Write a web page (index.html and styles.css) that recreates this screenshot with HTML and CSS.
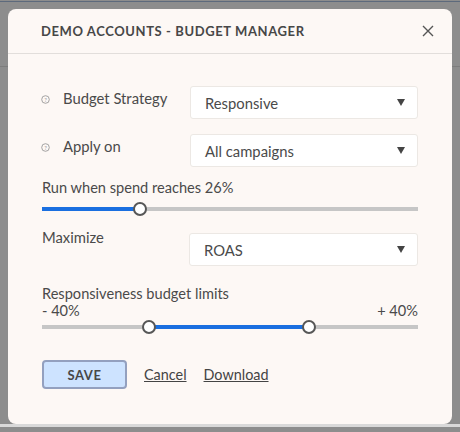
FILE: index.html
```html
<!doctype html>
<html>
<head>
<meta charset="utf-8">
<title>Budget Manager</title>
<link rel="stylesheet" href="styles.css">
</head>
<body>

<div class="modal">
    <div class="head">
        <h2 class="title">DEMO ACCOUNTS - BUDGET MANAGER</h2>
        <svg class="close" width="12" height="12" viewBox="0 0 12 12"><path d="M1 1L11 11M11 1L1 11" stroke="#555" stroke-width="1.4" fill="none"/></svg>
    </div>

    <div class="body">
        <div class="row first">
            <div class="label"><svg class="help" width="9" height="9" viewBox="0 0 9 9"><circle cx="4.5" cy="4.5" r="3.8" stroke="#9a9a9a" stroke-width="0.9" fill="none"/><text x="4.5" y="6.5" font-size="6" text-anchor="middle" fill="#9a9a9a" font-family="Lato, sans-serif">?</text></svg>Budget Strategy</div>
            <div class="select">Responsive<svg width="8" height="7" viewBox="0 0 8 7"><polygon points="0,0 8,0 4,7" fill="#444"/></svg></div>
        </div>
        <div class="row">
            <div class="label"><svg class="help" width="9" height="9" viewBox="0 0 9 9"><circle cx="4.5" cy="4.5" r="3.8" stroke="#9a9a9a" stroke-width="0.9" fill="none"/><text x="4.5" y="6.5" font-size="6" text-anchor="middle" fill="#9a9a9a" font-family="Lato, sans-serif">?</text></svg>Apply on</div>
            <div class="select">All campaigns<svg width="8" height="7" viewBox="0 0 8 7"><polygon points="0,0 8,0 4,7" fill="#444"/></svg></div>
        </div>

        <div class="caption spend">Run when spend reaches 26%</div>
        <div class="slider">
            <div class="fill" style="left:0; width:26%"></div>
            <div class="thumb" style="left:26%"></div>
        </div>

        <div class="row max">
            <div class="label plain">Maximize</div>
            <div class="select">ROAS<svg width="8" height="7" viewBox="0 0 8 7"><polygon points="0,0 8,0 4,7" fill="#444"/></svg></div>
        </div>

        <div class="caption limits">Responsiveness budget limits</div>
        <div class="ends"><span>- 40%</span><span>+ 40%</span></div>
        <div class="slider range">
            <div class="fill" style="left:28.5%; width:42.5%"></div>
            <div class="thumb" style="left:28.5%"></div>
            <div class="thumb" style="left:71%"></div>
        </div>

        <div class="actions">
            <button class="save">SAVE</button>
            <a href="#" class="link">Cancel</a>
            <a href="#" class="link">Download</a>
        </div>
    </div>
</div>

</body>
</html>
```

FILE: styles.css
```css
*{ margin: 0; padding: 0; box-sizing: border-box; }
html,body{ height: 100%; }
body{ font-family: Lato, "Open Sans", sans-serif; color: #4a4a4a; overflow: hidden;
    background:
        linear-gradient(#5d6a7c, #5d6a7c) 0 1px / 100% 1px no-repeat,
        linear-gradient(#7d7d7d, #7d7d7d) 0 66px / 100% 1px no-repeat,
        linear-gradient(#d9d9d9, #d9d9d9) 0 424px / 100% 3px no-repeat,
        #8d8d8d; }

.modal{ width: 444px; height: 415px; margin: 9px 0 0 8px; background: #fdf8f5; border-radius: 8px; }

/* header */
.head{ height: 45px; display: flex; align-items: center; justify-content: space-between; padding: 0 18px 0 33px; border-bottom: 1px solid #e2dedb; }
.title{ font-size: 13px; font-weight: 700; letter-spacing: 0.6px; color: #474747; }
.close{ cursor: pointer; }

/* content */
.body{ padding: 32px 34px 0; }
.row{ display: flex; justify-content: space-between; align-items: flex-start; margin-bottom: 15px; }
.label{ display: flex; align-items: center; font-size: 14.8px; padding-top: 3px; color: #4a4a4a; }
.help{ margin: 2px 13px 0 -1px; }
.select{ width: 228px; height: 33px; display: flex; align-items: center; justify-content: space-between; padding: 0 12px 0 14px; background: #fff; border: 1px solid #ece8e4; border-radius: 3px; font-size: 14.8px; color: #4a4a4a; }
.select svg{ width: 8px; height: 7px; }

.caption{ font-size: 14.6px; }
.spend{ margin-top: -3px; }
.slider{ position: relative; height: 4px; background: #c6c6c6; margin: 11px 0 0; }
.fill{ position: absolute; top: 0; height: 4px; background: #1a6fe0; }
.thumb{ position: absolute; top: -5px; width: 14px; height: 14px; margin-left: -7px; background: #fff; border: 2px solid #575757; border-radius: 50%; }

.max{ margin-top: 22px; margin-bottom: 0; }
.max .select{ width: 229px; }
.plain{ padding-top: 0; margin-top: -5px; }

.limits{ margin-top: 19px; }
.ends{ display: flex; justify-content: space-between; font-size: 14.6px; margin-top: 0; }
.range{ margin-top: 6px; }

/* buttons */
.actions{ display: flex; align-items: center; margin-top: 31px; }
.save{ width: 85px; height: 29px; background: #cde3ff; border: 2px solid #93a0bf; border-radius: 4px; font-family: inherit; font-size: 13px; font-weight: 700; letter-spacing: 0.6px; color: #474747; cursor: pointer; }
.link{ font-size: 14.4px; color: #444; text-decoration: underline; margin-left: 17px; }
```
